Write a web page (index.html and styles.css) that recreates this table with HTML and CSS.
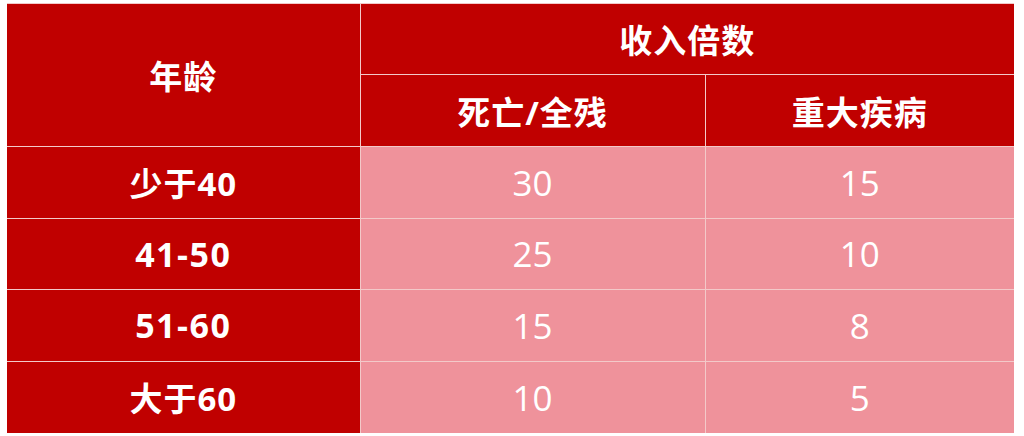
FILE: index.html
```html
<!DOCTYPE html>
<html lang="zh">
<head>
<meta charset="utf-8">
<title>收入倍数</title>
<link rel="stylesheet" href="styles.css">
</head>
<body>
<table class="grid">
  <colgroup>
    <col class="c1">
    <col class="c2">
    <col class="c3">
  </colgroup>
  <thead>
    <tr class="h1">
      <th class="head" rowspan="2">年龄</th>
      <th class="head" colspan="2">收入倍数</th>
    </tr>
    <tr class="h2">
      <th class="head">死亡/全残</th>
      <th class="head">重大疾病</th>
    </tr>
  </thead>
  <tbody>
    <tr class="row"><th class="head">少于40</th><td class="cell">30</td><td class="cell">15</td></tr>
    <tr class="row"><th class="head num">41-50</th><td class="cell">25</td><td class="cell">10</td></tr>
    <tr class="row"><th class="head num">51-60</th><td class="cell">15</td><td class="cell">8</td></tr>
    <tr class="row"><th class="head">大于60</th><td class="cell">10</td><td class="cell">5</td></tr>
  </tbody>
</table>
</body>
</html>
```

FILE: styles.css
```css
html, body {
  margin: 0;
  padding: 0;
  background: #ffffff;
}

body {
  padding: 3px 0 0 7px;
}

.grid {
  border-collapse: collapse;
  table-layout: fixed;
  width: 1007px;
  border-top: 1px solid #f3c9c9;
}

.c1 { width: 353px; }
.c2 { width: 345px; }
.c3 { width: 309px; }

.grid th,
.grid td {
  border: 1px solid #f3c9c9;
  padding: 0;
  text-align: center;
  vertical-align: middle;
  color: #ffffff;
}

.grid tr > :first-child { border-left: none; }
.grid tr > :last-child { border-right: none; }
.grid tbody tr:last-child > * { border-bottom: none; }

.head {
  background: #c00000;
  font-family: "Open Sans", "Noto Sans CJK SC", sans-serif;
  font-weight: 700;
  font-size: 33px;
  letter-spacing: 1px;
}

.num {
  font-size: 34px;
  letter-spacing: 1.5px;
}

.cell {
  background: #ef929b;
  font-family: "Open Sans", "Noto Sans", sans-serif;
  font-weight: 400;
  font-size: 35px;
}

.h1 { height: 71px; }
.h2 { height: 72px; }
.row { height: 71.5px; }
```
